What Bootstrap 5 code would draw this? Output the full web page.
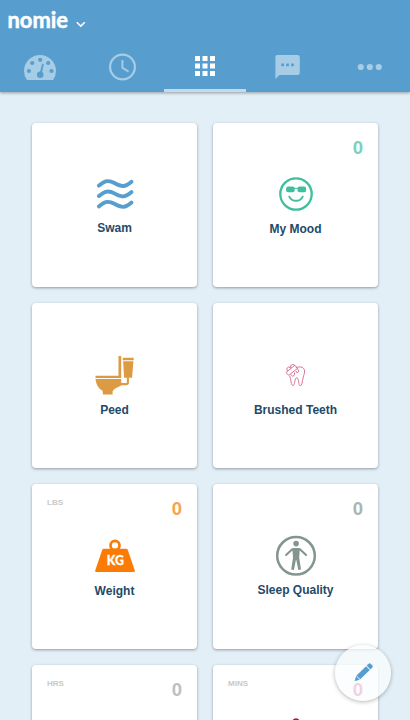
<!DOCTYPE html>
<html lang="en">
<head>
<meta charset="utf-8">
<meta name="viewport" content="width=device-width, initial-scale=1">
<title>Nomie</title>
<link href="https://cdn.jsdelivr.net/npm/bootstrap@5.3.0/dist/css/bootstrap.min.css" rel="stylesheet">
<style>
body{font-family:"Liberation Sans",Arial,sans-serif;background:#e2eff7;height:720px;overflow:hidden}
.topbar{background:#579ecf;height:92px;box-shadow:0 1px 3px rgba(0,0,0,.35)}
.brand-row{height:42px}
.tab{height:50px;border-bottom:3px solid transparent}
.tab.active{border-color:#c5daea}
.tab svg{display:block}
.trackers{display:grid;grid-template-columns:1fr 1fr;grid-auto-rows:164.6px;gap:16px;padding:30.8px 32px 0;height:628px;overflow:hidden}
.tracker{border:0;border-radius:4px;box-shadow:0 1px 3px rgba(0,0,0,.36);padding-top:41.2px}
.tracker svg{width:60px;height:56px;flex:none}
.tname{font-size:12px;line-height:16px;font-weight:700;color:#234a67}
.lower{padding-top:1px}
.lowest{padding-top:2px}
.tval{top:14px;right:15px;font-size:18.5px;line-height:22px;font-weight:700}
.unit{top:14px;left:15px;font-size:8px;line-height:10px;color:#c9c9c9;font-weight:700}
.fab{left:335px;top:645px;width:56px;height:56px;border:0;padding:0;background:rgba(250,252,254,.76);box-shadow:0 1px 4px rgba(0,0,0,.3)}
.fab svg{display:block}
</style>
<script src="https://cdn.jsdelivr.net/npm/bootstrap@5.3.0/dist/js/bootstrap.bundle.min.js"></script>
</head>
<body>
<header class="topbar position-relative">
  <div class="brand-row">
    <svg class="d-block" width="100" height="42" role="img" aria-label="nomie">
      <text x="7.5" y="27.6" font-family="Lato,sans-serif" font-weight="700" font-size="22.5" fill="#fff" stroke="#fff" stroke-width=".5" textLength="60.5" lengthAdjust="spacingAndGlyphs">nomie</text>
      <path d="M76.8 22.3l4 3.8 4-3.8" fill="none" stroke="#fff" stroke-width="1.5"/>
    </svg>
  </div>
  <nav class="d-flex">
    <a class="tab col" href="#" aria-label="Dashboard"><svg width="82" height="47" viewBox="0 42 82 47"><path d="M27 80Q24 76 24 71a16 16 0 0 1 32 0q0 5-3 9z" fill="#a6cce6"/><g fill="#579ecf"><circle cx="28.9" cy="71" r="2.1"/><circle cx="32.2" cy="63" r="2.1"/><circle cx="40.2" cy="59.8" r="2.1"/><circle cx="48.2" cy="63" r="2.1"/><circle cx="51.5" cy="71" r="2.1"/><circle cx="40.2" cy="74.7" r="3.3"/><path d="M42.2 63.8l1.600.3-2.200 10.500-2.200-.4z"/></g></svg></a>
    <a class="tab col" href="#" aria-label="History"><svg width="82" height="47" viewBox="82 42 82 47"><g fill="none" stroke="#a6cce6" stroke-width="2.2"><circle cx="122.5" cy="67" r="12.4"/><path d="M122.4 60v7.8l6.2 3.8" stroke-width="1.9"/></g></svg></a>
    <a class="tab col active" href="#" aria-label="Trackers"><svg width="82" height="47" viewBox="164 42 82 47"><path fill="#fff" d="M195 56h5v5h-5zm7.5 0h5v5h-5zm7.5 0h5v5h-5zM195 63.5h5v5h-5zm7.5 0h5v5h-5zm7.5 0h5v5h-5zM195 71h5v5h-5zm7.5 0h5v5h-5zm7.5 0h5v5h-5z"/></svg></a>
    <a class="tab col" href="#" aria-label="Notes"><svg width="82" height="47" viewBox="246 42 82 47"><path fill="#a6cce6" d="M277.4 55h20.2q2.2 0 2.2 2.2v15.6q0 2.2-2.2 2.2H279.4l-4 4V57.2q0-2.2 2-2.2z"/><path fill="#579ecf" d="M281.3 63.5h2.7v2.7h-2.7zm4.9 0h2.7v2.7h-2.7zm4.9 0h2.7v2.7h-2.7z"/></svg></a>
    <a class="tab col" href="#" aria-label="More"><svg width="82" height="47" viewBox="328 42 82 47"><g fill="#a6cce6"><circle cx="360.8" cy="67" r="3.1"/><circle cx="369.8" cy="67" r="3.1"/><circle cx="378.8" cy="67" r="3.1"/></g></svg></a>
  </nav>
</header>
<main class="trackers">
  <div class="card tracker align-items-center">
    <svg viewBox="85.1 164 60 56"><g fill="none" stroke="#579ecf" stroke-width="3.9" stroke-linecap="round"><path id="wave" d="M99 185.6C103 182.4 107 178.8 114.5 183S125 187.3 131.600 181.700"/><use href="#wave" y="10.4"/><use href="#wave" y="20.8"/></g></svg>
    <div class="tname">Swam</div>
  </div>
  <div class="card tracker align-items-center">
    <span class="tval position-absolute" style="color:#79d2b8">0</span>
    <svg viewBox="265.5 164 60 56"><g fill="none" stroke="#3fbf9b"><circle cx="295.5" cy="194" r="15.7" stroke-width="2.3"/><path d="M288.8 196.6c2.4 5.600 11 5.600 13.400 0" stroke-width="1.9" stroke-linecap="round"/><path d="M293 188.3h5" stroke-width="1"/></g><rect x="285.6" y="186.6" width="8.6" height="5.6" rx="2" fill="#3fbf9b"/><rect x="297" y="186.6" width="8.6" height="5.6" rx="2" fill="#3fbf9b"/></svg>
    <div class="tname lower">My Mood</div>
  </div>
  <div class="card tracker align-items-center">
    <svg viewBox="85.1 344.8 60 56"><g fill="#dc9b43"><path d="M118.6 355.8h2.7v22h-25.7v-2.3h23zM122.8 357.5h11v2.5h-11zM123.2 361h10.3l-1.3 16.5h-8zM95.6 378.9h25.7v6.3l-5 2.6q-3.4 1.6-3.600 3.4v3h-9.6l-.4-3.600Q96.6 388 95.6 378.9z"/><path d="M128 377v5.2q0 1.7-1.7 1.7h-6" fill="none" stroke="#dc9b43" stroke-width="2.1"/></g></svg>
    <div class="tname lower">Peed</div>
  </div>
  <div class="card tracker align-items-center">
    <svg viewBox="266.1 344.8 60 56"><g fill="none" stroke="#d4668a" stroke-width=".9" stroke-linejoin="round"><path d="M296 367.2c2.4-.2 4.500-1 6.600.1 2.700 1.500 2.300 5.200 1.300 7.700-1.600 4-.7 7.300-2.700 10.100-1.600 1.200-2.100-.7-2.300-2.500-.4-3.600-1.200-5-2.200-5s-1.600 2.200-2 4.800c-.3 2-1 3.800-2.400 2.600-1.600-2-1-6.200-2.500-9.200"/><path d="M286.2 372.2l8.700-7.200 2.600 3.200-8.700 7z"/><path d="M287.5 371l-.6-2.800 2-1.500 2.200 1.200m0 0l-.4-2.500 2.200-1.300 2 1M290.7 374l2 2.200 2-1.500-.3-2.600m1.600-1.300l1.400 2 1.500-1.800-1.400-2.800"/></g></svg>
    <div class="tname lower">Brushed Teeth</div>
  </div>
  <div class="card tracker align-items-center">
    <span class="unit position-absolute">LBS</span>
    <span class="tval position-absolute" style="color:#f9a24e">0</span>
    <svg viewBox="84.5 525.2 60 56"><circle cx="114.5" cy="545.6" r="4.5" fill="none" stroke="#fb7b05" stroke-width="2.7"/><path fill="#fb7b05" d="M103.300 549h22.400q1.200 0 1.600 1.200l7 20.400q.4 1.500-1 1.500H95.700q-1.400 0-1-1.500l7-20.400q.4-1.200 1.600-1.200z"/><text x="114.800" y="565.700" text-anchor="middle" font-family="Lato,sans-serif" font-weight="900" font-size="12.300" fill="#fff" stroke="#fff" stroke-width=".3">KG</text></svg>
    <div class="tname lowest">Weight</div>
  </div>
  <div class="card tracker align-items-center">
    <span class="tval position-absolute" style="color:#a9b5b0">0</span>
    <svg viewBox="265.5 525.2 60 56"><circle cx="295.5" cy="556" r="18.8" fill="none" stroke="#84958e" stroke-width="2.5"/><circle cx="295.6" cy="543.8" r="2.8" fill="#84958e"/><path d="M285.600 555.200l6.200-5.800h7.600l6.200 5.800" fill="none" stroke="#84958e" stroke-width="2.100" stroke-linecap="round" stroke-linejoin="round"/><path d="M291.800 548.400h7.600l-.7 9.600 1.800 11.600-2.700.5-2-9.800h-.4l-2 9.800-2.700-.5 1.800-11.600z" fill="#84958e"/></svg>
    <div class="tname lower">Sleep Quality</div>
  </div>
  <div class="card tracker align-items-center">
    <span class="unit position-absolute">HRS</span>
    <span class="tval position-absolute" style="color:#b7c1c5">0</span>
  </div>
  <div class="card tracker align-items-center">
    <span class="unit position-absolute">MINS</span>
    <span class="tval position-absolute" style="color:#d4497f">0</span>
    <svg viewBox="265.5 705.8 60 56"><circle cx="295.5" cy="721.5" r="3.5" fill="#b3124a"/></svg>
  </div>
</main>
<button class="fab btn rounded-circle position-fixed" aria-label="Edit trackers">
  <svg width="56" height="56" viewBox="335 645 56 56"><g transform="translate(354.3 681.3) rotate(-44)" fill="#579ecf"><path d="M0 0l1.700-.7v1.400zM1.800-.8l3.200-1.800v5.200l-3.200-1.800zM5.600-2.700H19v5.400H5.600zM19.800-2.700h2.700q1.500 0 1.500 1.500v2.400q0 1.500-1.500 1.500h-2.700z"/></g></svg>
</button>
</body>
</html>
